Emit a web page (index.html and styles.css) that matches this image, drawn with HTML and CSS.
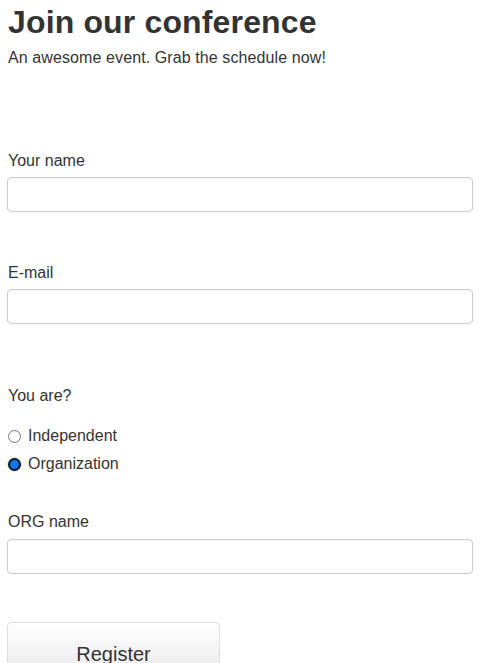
FILE: index.html
```html
<!DOCTYPE html>
<html lang="en">
<head>
<meta charset="utf-8">
<title>Join our conference</title>
<link rel="stylesheet" href="styles.css">
</head>
<body>
<header class="intro">
  <h1 class="title">Join our conference</h1>
  <p class="lead">An awesome event. Grab the schedule now!</p>
</header>
<form class="form">
  <div class="field field-first">
    <label class="label" for="name">Your name</label>
    <input class="input" id="name" type="text">
  </div>
  <div class="field field-email">
    <label class="label" for="email">E-mail</label>
    <input class="input" id="email" type="email">
  </div>
  <div class="field field-type">
    <div class="label">You are?</div>
    <div class="choices">
      <label class="choice"><input class="radio" type="radio" name="type"><span>Independent</span></label>
      <label class="choice"><input class="radio" type="radio" name="type" checked><span>Organization</span></label>
    </div>
  </div>
  <div class="field field-org">
    <label class="label label-org" for="org">ORG name</label>
    <input class="input" id="org" type="text">
  </div>
  <button class="button" type="button">Register</button>
</form>
</body>
</html>
```

FILE: styles.css
```css
html, body {
  margin: 0;
  padding: 0;
  background: #fff;
}
body {
  padding-top: 4px;
  font-family: "Liberation Sans", Arial, sans-serif;
  font-size: 16px;
  line-height: 18px;
  color: #333;
}
.intro {
  padding-left: 8px;
}
.title {
  margin: 0;
  font-size: 32px;
  line-height: 36px;
  font-weight: bold;
  color: #333;
  letter-spacing: 0.15px;
}
.lead {
  margin: 9px 0 0;
  letter-spacing: 0.1px;
}
.form {
  margin-left: 7px;
  width: 466px;
}
.field {
  display: flex;
  flex-direction: column;
}
.field-first { margin-top: 85px; }
.field-email { margin-top: 52px; }
.field-type { margin-top: 63px; }
.field-org { margin-top: 40px; }
.label {
  display: block;
  padding-left: 1px;
  margin-bottom: 7px;
}
.label-org {
  margin-bottom: 8px;
}
.input {
  box-sizing: border-box;
  width: 466px;
  height: 35px;
  margin: 0;
  border: 1px solid #ccc;
  border-radius: 4px;
  background: #fff;
  box-shadow: inset 0 1px 1px rgba(0,0,0,0.04);
  font: inherit;
}
.choices {
  display: flex;
  flex-direction: column;
  gap: 10px;
  margin-top: 15px;
}
.choice {
  display: flex;
  align-items: center;
  gap: 7px;
  padding-left: 1px;
}
.radio {
  appearance: none;
  -webkit-appearance: none;
  box-sizing: border-box;
  width: 13px;
  height: 13px;
  margin: 0;
  border: 1px solid #767676;
  border-radius: 50%;
  background: #fff;
  flex: none;
}
.radio:checked {
  border: 2px solid #111;
  background: #0a75f5;
  box-shadow: 0 0 0 1px #d6e6ff;
}
.button {
  display: block;
  box-sizing: border-box;
  width: 213px;
  margin-top: 48px;
  padding: 20px 0 16px;
  border: 1px solid #ddd;
  border-radius: 4px;
  background: linear-gradient(#fff, #e6e6e6);
  font-family: "Liberation Sans", Arial, sans-serif;
  font-size: 20px;
  line-height: 23px;
  color: #333;
  text-align: center;
}
```
